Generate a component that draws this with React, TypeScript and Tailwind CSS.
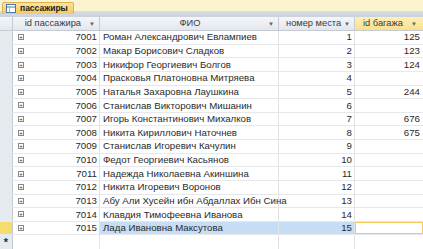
import { useState } from "react";

const rows = [
  { id: 7001, fio: "Роман Александрович Евлампиев", seat: 1, bag: 125 },
  { id: 7002, fio: "Макар Борисович Сладков", seat: 2, bag: 123 },
  { id: 7003, fio: "Никифор Георгиевич Болгов", seat: 3, bag: 124 },
  { id: 7004, fio: "Прасковья Платоновна Митряева", seat: 4, bag: null },
  { id: 7005, fio: "Наталья Захаровна Лаушкина", seat: 5, bag: 244 },
  { id: 7006, fio: "Станислав Викторович Мишанин", seat: 6, bag: null },
  { id: 7007, fio: "Игорь Константинович Михалков", seat: 7, bag: 676 },
  { id: 7008, fio: "Никита Кириллович Наточнев", seat: 8, bag: 675 },
  { id: 7009, fio: "Станислав Игоревич Качулин", seat: 9, bag: null },
  { id: 7010, fio: "Федот Георгиевич Касьянов", seat: 10, bag: null },
  { id: 7011, fio: "Надежда Николаевна Акиншина", seat: 11, bag: null },
  { id: 7012, fio: "Никита Игоревич Воронов", seat: 12, bag: null },
  { id: 7013, fio: "Абу Али Хусейн ибн Абдаллах Ибн Сина", seat: 13, bag: null },
  { id: 7014, fio: "Клавдия Тимофеевна Иванова", seat: 14, bag: null },
  { id: 7015, fio: "Лада Ивановна Максутова", seat: 15, bag: null },
];

const cols = "grid grid-cols-[13px_87px_179px_76px_68px]";

function Arrow() {
  return <span className="text-[6px] text-[#666] leading-none">▼</span>;
}

function Expand() {
  return (
    <span className="flex items-center justify-center w-[6px] h-[6px] border border-[#888] text-[6px] leading-none text-[#333] bg-white">
      +
    </span>
  );
}

function TableIcon() {
  return (
    <svg width="10" height="9" viewBox="0 0 10 9">
      <rect x="0.5" y="0.5" width="9" height="8" fill="#fff" stroke="#4a74b0" />
      <line x1="0.5" y1="3" x2="9.5" y2="3" stroke="#4a74b0" />
      <line x1="3.5" y1="3" x2="3.5" y2="8.5" stroke="#9ab0d0" />
    </svg>
  );
}

export default function App() {
  const [current] = useState(7015);
  return (
    <div className="w-[423px] h-[249px] overflow-hidden bg-white text-[9.7px] text-[#2a2a2a] font-['Liberation_Sans',sans-serif] leading-none whitespace-nowrap">
      <div className="h-[17px] flex flex-col bg-[#fcf3cf]">
        <div className="h-[11px] flex items-end pl-[2px]">
          <div className="h-[12px] -mb-[3px] z-10 flex items-center gap-[4px] pl-[3px] pr-[5px] bg-gradient-to-b from-[#fbe39a] to-[#f5c95e] border border-[#d9b25a] border-b-0 rounded-t-[2px]">
            <TableIcon />
            <span className="text-[8.5px] font-bold text-[#222]">пассажиры</span>
          </div>
        </div>
        <div className="flex-1 bg-gradient-to-b from-[#d8dee7] to-[#cbd2dc]" />
      </div>

      <div className={`${cols} h-[14px] border-b border-[#c5cad3] bg-gradient-to-b from-[#f4f6f9] to-[#e3e7ed] text-[9.3px] text-[#3a3a3a]`}>
        <div className="border-r border-[#c5cad3]" />
        <div className="flex items-center justify-end gap-[8px] pr-[4px] border-r border-[#c5cad3]">
          <span>id пассажира</span>
          <Arrow />
        </div>
        <div className="flex items-center pr-[4px] border-r border-[#c5cad3]">
          <span className="flex-1 text-center pl-[12px]">ФИО</span>
          <Arrow />
        </div>
        <div className="flex items-center justify-between pl-[7px] pr-[4px] border-r border-[#c5cad3]">
          <span>номер места</span>
          <Arrow />
        </div>
        <div className="flex items-center justify-between pl-[8px] pr-[6px] bg-gradient-to-b from-[#fdf0b8] to-[#f9e08a]">
          <span>id багажа</span>
          <Arrow />
        </div>
      </div>

      {rows.map((r) => {
        const cur = r.id === current;
        return (
          <div key={r.id} className={`${cols} h-[13.64px] border-b border-[#e6e8ec]`}>
            <div className={`border-r border-[#c5cad3] ${cur ? "bg-[#f6dc6e]" : "bg-[#e6ebf2]"}`} />
            <div className="flex items-center justify-between pl-[5px] pr-[2px] border-r border-[#e0e2e6]">
              <Expand />
              <span>{r.id}</span>
            </div>
            <div className={`flex items-center pl-[3px] border-r border-[#e0e2e6] ${cur ? "bg-[#c6def5]" : ""}`}>
              {r.fio}
            </div>
            <div className={`flex items-center justify-end pr-[2px] border-r border-[#e0e2e6] ${cur ? "bg-[#c6def5]" : ""}`}>
              {r.seat}
            </div>
            <div className={`flex items-center justify-end pr-[3px] ${cur ? "border border-[#efc95a] bg-white" : ""}`}>
              {r.bag ?? ""}
            </div>
          </div>
        );
      })}

      <div className={`${cols} h-[13.64px]`}>
        <div className="flex items-center justify-center border-r border-[#c5cad3] bg-[#e6ebf2] text-[11px] font-bold">*</div>
        <div className="border-r border-[#e0e2e6]" />
        <div className="border-r border-[#e0e2e6]" />
        <div className="border-r border-[#e0e2e6]" />
        <div />
      </div>
    </div>
  );
}
